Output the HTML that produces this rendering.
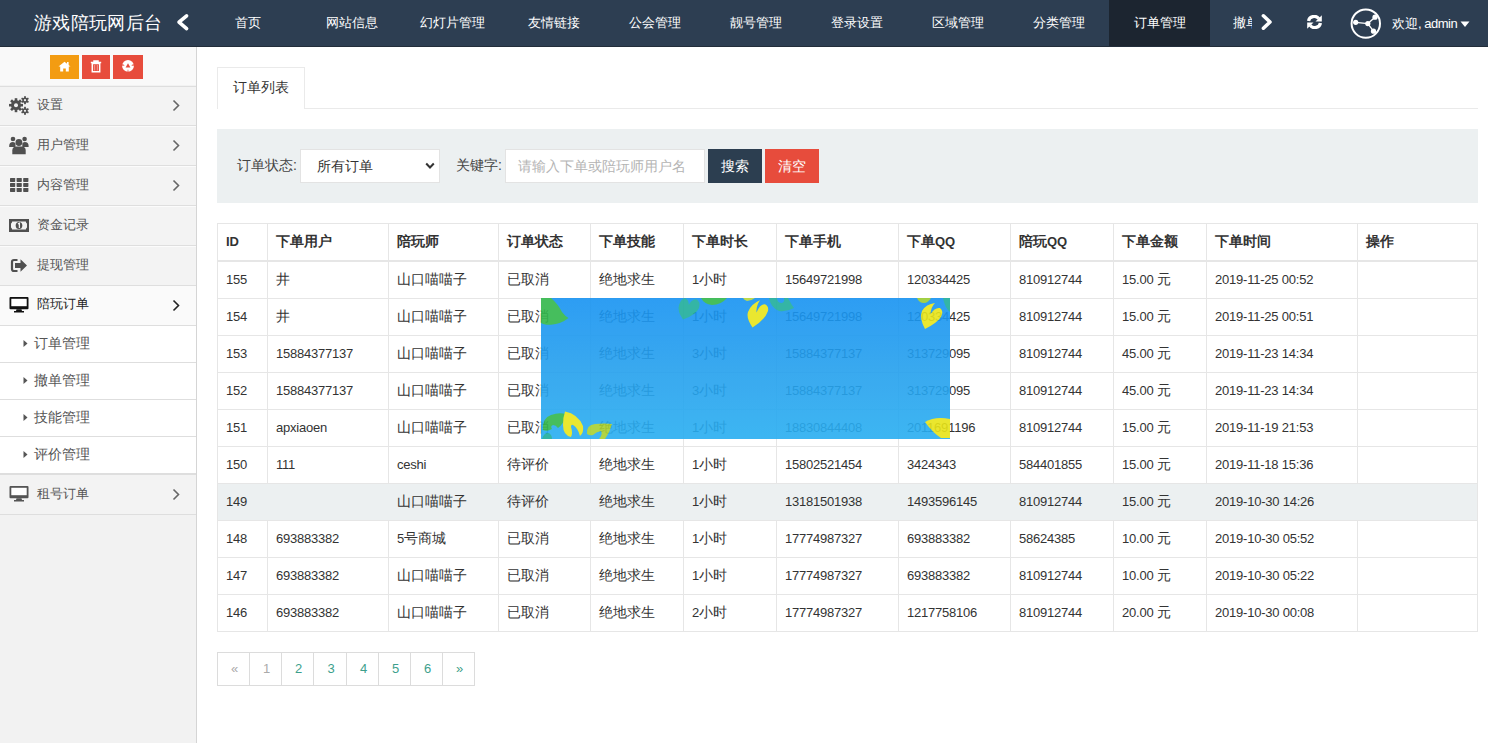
<!DOCTYPE html><html><head><meta charset="utf-8"><style>
*{margin:0;padding:0;box-sizing:border-box}
html,body{width:1488px;height:743px;overflow:hidden;background:#fff;font-family:"Liberation Sans", sans-serif;color:#333}
.abs{position:absolute}
.t{position:absolute;white-space:nowrap;line-height:20px}
.n{font-size:13px;letter-spacing:-0.22px}
svg{position:absolute;display:block}
</style></head><body>

<div class="abs" style="left:0;top:0;width:1488px;height:47px;background:#2d3e52"></div>
<div class="abs" style="left:0;top:46px;width:1488px;height:1px;background:#222d3a"></div>
<div class="t" style="left:34px;top:12px;font-size:18px;line-height:22px;color:#fff;letter-spacing:0.35px">游戏陪玩网后台</div>
<svg style="left:174px;top:11px" width="16" height="22" viewBox="0 0 16 22"><path d="M12.6 4.8 L5 11.2 L12.6 17.6" fill="none" stroke="#fff" stroke-width="3.6" stroke-linecap="round" stroke-linejoin="round"/></svg>
<div class="abs" style="left:1109px;top:0;width:101px;height:46px;background:#1c2530"></div>
<div class="t" style="left:187.5px;width:120px;text-align:center;top:13px;font-size:13px;color:#fff">首页</div>
<div class="t" style="left:291.5px;width:120px;text-align:center;top:13px;font-size:13px;color:#fff">网站信息</div>
<div class="t" style="left:392.5px;width:120px;text-align:center;top:13px;font-size:13px;color:#fff">幻灯片管理</div>
<div class="t" style="left:493.5px;width:120px;text-align:center;top:13px;font-size:13px;color:#fff">友情链接</div>
<div class="t" style="left:595px;width:120px;text-align:center;top:13px;font-size:13px;color:#fff">公会管理</div>
<div class="t" style="left:696px;width:120px;text-align:center;top:13px;font-size:13px;color:#fff">靓号管理</div>
<div class="t" style="left:797px;width:120px;text-align:center;top:13px;font-size:13px;color:#fff">登录设置</div>
<div class="t" style="left:898px;width:120px;text-align:center;top:13px;font-size:13px;color:#fff">区域管理</div>
<div class="t" style="left:999px;width:120px;text-align:center;top:13px;font-size:13px;color:#fff">分类管理</div>
<div class="t" style="left:1100px;width:120px;text-align:center;top:13px;font-size:13px;color:#fff">订单管理</div>
<div class="abs" style="left:1233px;top:0;width:19px;height:46px;overflow:hidden"><div class="t" style="left:0;top:13px;font-size:13px;color:#fff">撤单管理</div></div>
<svg style="left:1259px;top:11px" width="16" height="22" viewBox="0 0 16 22"><path d="M4.4 4.8 L11 11 L4.4 17.2" fill="none" stroke="#fff" stroke-width="3.6" stroke-linecap="round" stroke-linejoin="round"/></svg>
<svg style="left:1306px;top:15px" width="17" height="14" viewBox="0 0 17 14">
<path d="M2.6 6 A5.6 5 0 0 1 12.8 3.6" fill="none" stroke="#fff" stroke-width="3.2"/>
<path d="M15.8 0.3 L15.8 6.6 L9.5 6.6 Z" fill="#fff"/>
<path d="M14.4 8 A5.6 5 0 0 1 4.2 10.4" fill="none" stroke="#fff" stroke-width="3.2"/>
<path d="M1.2 13.7 L1.2 7.4 L7.5 7.4 Z" fill="#fff"/>
</svg>
<svg style="left:1350px;top:8px" width="32" height="32" viewBox="0 0 32 32">
<circle cx="15.8" cy="15.6" r="14.2" fill="none" stroke="#fff" stroke-width="2"/>
<path d="M5.7 14.3 L17.8 15.6 L25 9.2 M17.8 15.6 L23.5 23.2" stroke="#fff" stroke-width="1.3" fill="none"/>
<circle cx="5.7" cy="14.3" r="2.6" fill="#fff"/><circle cx="17.8" cy="15.6" r="2.6" fill="#fff"/>
<circle cx="25" cy="9.2" r="2.6" fill="#fff"/><circle cx="23.5" cy="23.2" r="2.6" fill="#fff"/>
</svg>
<div class="t" style="left:1392px;top:14px;font-size:13px;color:#fff">欢迎, <span style="letter-spacing:-0.5px;margin-left:-1px">admin</span></div>
<svg style="left:1460px;top:21px" width="10" height="7" viewBox="0 0 10 7"><path d="M0.5 0.5 L9.5 0.5 L5 6 Z" fill="#fff"/></svg>
<div class="abs" style="left:0;top:47px;width:196px;height:696px;background:#f2f2f2"></div>
<div class="abs" style="left:196px;top:47px;width:1px;height:696px;background:#d5d5d5"></div>
<div class="abs" style="left:0;top:47px;width:196px;height:38px;background:#f9f9f9"></div>
<div class="abs" style="left:50px;top:55px;width:29px;height:24px;background:#f39c12"></div>
<div class="abs" style="left:82px;top:55px;width:28px;height:24px;background:#e74c3c"></div>
<div class="abs" style="left:113px;top:55px;width:30px;height:24px;background:#e74c3c"></div>
<svg style="left:58px;top:61px" width="13" height="11" viewBox="0 0 13 11"><path d="M6.5 0.8 L12.5 5.6 L10.8 5.6 L10.8 10.4 L7.8 10.4 L7.8 7.6 L5.2 7.6 L5.2 10.4 L2.2 10.4 L2.2 5.6 L0.5 5.6 Z" fill="#fff"/><rect x="9" y="1" width="1.6" height="3" fill="#fff"/></svg>
<svg style="left:90px;top:60px" width="12" height="13" viewBox="0 0 12 13"><path d="M0.8 2.6 H11.2 M4 2.6 V1 H8 V2.6" stroke="#fff" stroke-width="1.5" fill="none"/><path d="M2.3 3.6 H9.7 V11.8 H2.3 Z" fill="none" stroke="#fff" stroke-width="1.5"/><path d="M4.7 5 V10.5 M7.3 5 V10.5" stroke="#fff" stroke-width="0.8" opacity="0.6"/></svg>
<svg style="left:121px;top:59px" width="14" height="14" viewBox="0 0 14 14"><circle cx="7" cy="6.9" r="5.9" fill="#fff"/><path d="M7 4.3 L9.4 8.4 H4.6 Z" fill="#e74c3c"/><path d="M6.4 12.8 L7 10 L7.6 12.8 Z M1.2 5 L3.8 6.2 L1.4 7 Z M12.8 5 L10.2 6.2 L12.6 7 Z" fill="#e74c3c"/></svg>
<div class="abs" style="left:0;top:87px;width:196px;height:38px;background:#f3f3f3"></div>
<div class="abs" style="left:0;top:126px;width:196px;height:39px;background:#f3f3f3"></div>
<div class="abs" style="left:0;top:126px;width:196px;height:1px;background:#fbfbfb"></div>
<div class="abs" style="left:0;top:166px;width:196px;height:39px;background:#f3f3f3"></div>
<div class="abs" style="left:0;top:166px;width:196px;height:1px;background:#fbfbfb"></div>
<div class="abs" style="left:0;top:206px;width:196px;height:39px;background:#f3f3f3"></div>
<div class="abs" style="left:0;top:206px;width:196px;height:1px;background:#fbfbfb"></div>
<div class="abs" style="left:0;top:246px;width:196px;height:39px;background:#f3f3f3"></div>
<div class="abs" style="left:0;top:246px;width:196px;height:1px;background:#fbfbfb"></div>
<div class="abs" style="left:0;top:286px;width:196px;height:39px;background:#fafafa"></div>
<div class="abs" style="left:0;top:326px;width:196px;height:36px;background:#fff"></div>
<div class="abs" style="left:0;top:363px;width:196px;height:36px;background:#fff"></div>
<div class="abs" style="left:0;top:400px;width:196px;height:36px;background:#fff"></div>
<div class="abs" style="left:0;top:437px;width:196px;height:36px;background:#fff"></div>
<div class="abs" style="left:0;top:475px;width:196px;height:39px;background:#f3f3f3"></div>
<div class="abs" style="left:0;top:86px;width:196px;height:1px;background:#dedede"></div>
<div class="abs" style="left:0;top:125px;width:196px;height:1px;background:#dedede"></div>
<div class="abs" style="left:0;top:165px;width:196px;height:1px;background:#dedede"></div>
<div class="abs" style="left:0;top:205px;width:196px;height:1px;background:#dedede"></div>
<div class="abs" style="left:0;top:245px;width:196px;height:1px;background:#dedede"></div>
<div class="abs" style="left:0;top:285px;width:196px;height:1px;background:#dedede"></div>
<div class="abs" style="left:0;top:325px;width:196px;height:1px;background:#dedede"></div>
<div class="abs" style="left:0;top:362px;width:196px;height:1px;background:#dedede"></div>
<div class="abs" style="left:0;top:399px;width:196px;height:1px;background:#dedede"></div>
<div class="abs" style="left:0;top:436px;width:196px;height:1px;background:#dedede"></div>
<div class="abs" style="left:0;top:514px;width:196px;height:1px;background:#dedede"></div>
<div class="abs" style="left:0;top:473px;width:196px;height:2px;background:#dedede"></div>
<div class="t" style="left:37px;top:95px;font-size:13px;color:#555">设置</div>
<div class="t" style="left:37px;top:135px;font-size:13px;color:#555">用户管理</div>
<div class="t" style="left:37px;top:175px;font-size:13px;color:#555">内容管理</div>
<div class="t" style="left:37px;top:215px;font-size:13px;color:#555">资金记录</div>
<div class="t" style="left:37px;top:255px;font-size:13px;color:#555">提现管理</div>
<div class="t" style="left:37px;top:294px;font-size:13px;color:#222">陪玩订单</div>
<div class="t" style="left:37px;top:484px;font-size:13px;color:#555">租号订单</div>
<svg style="left:171px;top:99px" width="10" height="13" viewBox="0 0 10 13"><path d="M2.5 1.5 L7.5 6.5 L2.5 11.5" fill="none" stroke="#666" stroke-width="1.6"/></svg>
<svg style="left:171px;top:139px" width="10" height="13" viewBox="0 0 10 13"><path d="M2.5 1.5 L7.5 6.5 L2.5 11.5" fill="none" stroke="#666" stroke-width="1.6"/></svg>
<svg style="left:171px;top:179px" width="10" height="13" viewBox="0 0 10 13"><path d="M2.5 1.5 L7.5 6.5 L2.5 11.5" fill="none" stroke="#666" stroke-width="1.6"/></svg>
<svg style="left:171px;top:299px" width="10" height="13" viewBox="0 0 10 13"><path d="M2.5 1.5 L7.5 6.5 L2.5 11.5" fill="none" stroke="#222" stroke-width="1.6"/></svg>
<svg style="left:171px;top:488px" width="10" height="13" viewBox="0 0 10 13"><path d="M2.5 1.5 L7.5 6.5 L2.5 11.5" fill="none" stroke="#666" stroke-width="1.6"/></svg>
<div class="t" style="left:34px;top:333px;font-size:14px;color:#555">订单管理</div>
<svg style="left:23px;top:340px" width="5" height="7" viewBox="0 0 5 7"><path d="M0.5 0 L4.5 3.5 L0.5 7 Z" fill="#555"/></svg>
<div class="t" style="left:34px;top:370px;font-size:14px;color:#555">撤单管理</div>
<svg style="left:23px;top:377px" width="5" height="7" viewBox="0 0 5 7"><path d="M0.5 0 L4.5 3.5 L0.5 7 Z" fill="#555"/></svg>
<div class="t" style="left:34px;top:407px;font-size:14px;color:#555">技能管理</div>
<svg style="left:23px;top:414px" width="5" height="7" viewBox="0 0 5 7"><path d="M0.5 0 L4.5 3.5 L0.5 7 Z" fill="#555"/></svg>
<div class="t" style="left:34px;top:444px;font-size:14px;color:#555">评价管理</div>
<svg style="left:23px;top:451px" width="5" height="7" viewBox="0 0 5 7"><path d="M0.5 0 L4.5 3.5 L0.5 7 Z" fill="#555"/></svg>
<svg style="left:8px;top:94px" width="24" height="22" viewBox="0 0 24 22">
<g fill="#505050">
<circle cx="8" cy="11.2" r="5"/>
<g transform="translate(8 11.2)"><rect x="-1.3" y="-7" width="2.6" height="14"/><rect x="-1.3" y="-7" width="2.6" height="14" transform="rotate(45)"/><rect x="-1.3" y="-7" width="2.6" height="14" transform="rotate(90)"/><rect x="-1.3" y="-7" width="2.6" height="14" transform="rotate(135)"/></g>
<circle cx="17" cy="6.2" r="2.6"/>
<g transform="translate(17 6.2)"><rect x="-0.9" y="-4" width="1.8" height="8"/><rect x="-0.9" y="-4" width="1.8" height="8" transform="rotate(60)"/><rect x="-0.9" y="-4" width="1.8" height="8" transform="rotate(120)"/></g>
<circle cx="17" cy="16.8" r="2.6"/>
<g transform="translate(17 16.8)"><rect x="-0.9" y="-4" width="1.8" height="8"/><rect x="-0.9" y="-4" width="1.8" height="8" transform="rotate(60)"/><rect x="-0.9" y="-4" width="1.8" height="8" transform="rotate(120)"/></g>
</g>
<circle cx="8" cy="11.2" r="2" fill="#f3f3f3"/><circle cx="17" cy="6.2" r="1.1" fill="#f3f3f3"/><circle cx="17" cy="16.8" r="1.1" fill="#f3f3f3"/>
</svg>
<svg style="left:9px;top:136px" width="20" height="19" viewBox="0 0 20 19">
<g fill="#505050">
<circle cx="4" cy="3" r="2.3"/><circle cx="15.6" cy="3" r="2.3"/>
<path d="M0.2 10 Q0.2 6 4 6 Q6 6 6.5 7.5 L6.5 11 H0.2 Z"/><path d="M19.6 10 Q19.6 6 15.8 6 Q13.8 6 13.3 7.5 L13.3 11 H19.6 Z"/>
<circle cx="9.9" cy="6.5" r="3.4"/>
<path d="M3.3 18.2 V14.5 Q3.3 10.5 7.5 10.5 H12.5 Q16.7 10.5 16.7 14.5 V18.2 Z"/>
</g></svg>
<svg style="left:10px;top:178px" width="19" height="14" viewBox="0 0 19 14"><g fill="#505050"><rect x="0" y="0" width="5.2" height="3.9" rx="0.6"/><rect x="0" y="5" width="5.2" height="3.9" rx="0.6"/><rect x="0" y="10" width="5.2" height="3.9" rx="0.6"/><rect x="6.6" y="0" width="5.2" height="3.9" rx="0.6"/><rect x="6.6" y="5" width="5.2" height="3.9" rx="0.6"/><rect x="6.6" y="10" width="5.2" height="3.9" rx="0.6"/><rect x="13.2" y="0" width="5.2" height="3.9" rx="0.6"/><rect x="13.2" y="5" width="5.2" height="3.9" rx="0.6"/><rect x="13.2" y="10" width="5.2" height="3.9" rx="0.6"/></g></svg>
<svg style="left:9px;top:219px" width="20" height="13" viewBox="0 0 20 13">
<rect x="0" y="0" width="20" height="13" fill="#505050"/>
<path d="M3.2 2.4 H16.8 Q17.2 4.2 18 4.6 V8.4 Q17.2 8.8 16.8 10.6 H3.2 Q2.8 8.8 2 8.4 V4.6 Q2.8 4.2 3.2 2.4 Z" fill="#f3f3f3"/>
<ellipse cx="10" cy="6.5" rx="3.3" ry="3.6" fill="#505050"/>
<path d="M9 4.9 L10.4 4.2 V8.9" stroke="#f3f3f3" stroke-width="1.3" fill="none"/>
</svg>
<svg style="left:10px;top:258px" width="18" height="15" viewBox="0 0 18 15">
<path d="M7.5 2 H4 Q2 2 2 4 V11 Q2 13 4 13 H7.5" fill="none" stroke="#505050" stroke-width="2.2"/>
<path d="M5 5 H10.5 V1.2 L17 7.5 L10.5 13.8 V10 H5 Z" fill="#505050"/>
</svg>
<svg style="left:9px;top:297px" width="20" height="17" viewBox="0 0 20 17">
<path d="M1.5 0 H18.5 Q19.5 0 19.5 1 V11.3 Q19.5 12.3 18.5 12.3 H1.5 Q0.5 12.3 0.5 11.3 V1 Q0.5 0 1.5 0 Z" fill="#111"/>
<rect x="2.3" y="1.8" width="15.4" height="7.4" fill="#fff"/>
<path d="M7.5 12.3 H12.5 L13 14 H15 V15.6 H5 V14 H7 Z" fill="#111"/>
</svg>
<svg style="left:9px;top:486px" width="20" height="17" viewBox="0 0 20 17">
<path d="M1.5 0 H18.5 Q19.5 0 19.5 1 V11.3 Q19.5 12.3 18.5 12.3 H1.5 Q0.5 12.3 0.5 11.3 V1 Q0.5 0 1.5 0 Z" fill="#555"/>
<rect x="2.3" y="1.8" width="15.4" height="7.4" fill="#fff"/>
<path d="M7.5 12.3 H12.5 L13 14 H15 V15.6 H5 V14 H7 Z" fill="#555"/>
</svg>
<div class="abs" style="left:217px;top:108px;width:1261px;height:1px;background:#eaeaea"></div>
<div class="abs" style="left:217px;top:67px;width:88px;height:42px;background:#fff;border:1px solid #eaeaea;border-bottom:none"></div>
<div class="t" style="left:233px;top:77px;font-size:14px;color:#333">订单列表</div>
<div class="abs" style="left:217px;top:129px;width:1261px;height:74px;background:#ecf0f1"></div>
<div class="t" style="left:237px;top:155px;font-size:14px;color:#444">订单状态:</div>
<div class="abs" style="left:300px;top:149px;width:140px;height:34px;background:#fff;border:1px solid #e3e3e3"></div>
<div class="t" style="left:317px;top:156px;font-size:14px;color:#333">所有订单</div>
<svg style="left:425px;top:162px" width="10" height="8" viewBox="0 0 10 8"><path d="M1.2 1.5 L5 5.5 L8.8 1.5" fill="none" stroke="#333" stroke-width="2"/></svg>
<div class="t" style="left:456px;top:155px;font-size:14px;color:#444">关键字:</div>
<div class="abs" style="left:505px;top:149px;width:200px;height:34px;background:#fff;border:1px solid #e3e3e3"></div>
<div class="t" style="left:518px;top:156px;font-size:14px;color:#b4b4b4">请输入下单或陪玩师用户名</div>
<div class="abs" style="left:708px;top:149px;width:54px;height:34px;background:#2c3e50"></div>
<div class="t" style="left:721px;top:156px;font-size:14px;color:#fff">搜索</div>
<div class="abs" style="left:765px;top:149px;width:54px;height:34px;background:#e74c3c"></div>
<div class="t" style="left:778px;top:156px;font-size:14px;color:#fff">清空</div>
<div class="abs" style="left:218px;top:484px;width:1259px;height:36px;background:#ecf0f1"></div>
<div class="abs" style="left:217px;top:223px;width:1px;height:409px;background:#e6e6e6"></div>
<div class="abs" style="left:267px;top:223px;width:1px;height:409px;background:#e6e6e6"></div>
<div class="abs" style="left:388px;top:223px;width:1px;height:409px;background:#e6e6e6"></div>
<div class="abs" style="left:498px;top:223px;width:1px;height:409px;background:#e6e6e6"></div>
<div class="abs" style="left:590px;top:223px;width:1px;height:409px;background:#e6e6e6"></div>
<div class="abs" style="left:683px;top:223px;width:1px;height:409px;background:#e6e6e6"></div>
<div class="abs" style="left:776px;top:223px;width:1px;height:409px;background:#e6e6e6"></div>
<div class="abs" style="left:898px;top:223px;width:1px;height:409px;background:#e6e6e6"></div>
<div class="abs" style="left:1010px;top:223px;width:1px;height:409px;background:#e6e6e6"></div>
<div class="abs" style="left:1113px;top:223px;width:1px;height:409px;background:#e6e6e6"></div>
<div class="abs" style="left:1206px;top:223px;width:1px;height:409px;background:#e6e6e6"></div>
<div class="abs" style="left:1357px;top:223px;width:1px;height:409px;background:#e6e6e6"></div>
<div class="abs" style="left:1477px;top:223px;width:1px;height:409px;background:#e6e6e6"></div>
<div class="abs" style="left:217px;top:223px;width:1261px;height:1px;background:#e6e6e6"></div>
<div class="abs" style="left:217px;top:260px;width:1261px;height:2px;background:#e6e6e6"></div>
<div class="abs" style="left:217px;top:298px;width:1261px;height:1px;background:#e6e6e6"></div>
<div class="abs" style="left:217px;top:335px;width:1261px;height:1px;background:#e6e6e6"></div>
<div class="abs" style="left:217px;top:372px;width:1261px;height:1px;background:#e6e6e6"></div>
<div class="abs" style="left:217px;top:409px;width:1261px;height:1px;background:#e6e6e6"></div>
<div class="abs" style="left:217px;top:446px;width:1261px;height:1px;background:#e6e6e6"></div>
<div class="abs" style="left:217px;top:483px;width:1261px;height:1px;background:#e6e6e6"></div>
<div class="abs" style="left:217px;top:520px;width:1261px;height:1px;background:#e6e6e6"></div>
<div class="abs" style="left:217px;top:557px;width:1261px;height:1px;background:#e6e6e6"></div>
<div class="abs" style="left:217px;top:594px;width:1261px;height:1px;background:#e6e6e6"></div>
<div class="abs" style="left:217px;top:631px;width:1261px;height:1px;background:#e6e6e6"></div>
<div class="abs" style="left:218px;top:484px;width:1259px;height:36px;background:#ecf0f1"></div>
<div class="t" style="left:226px;top:231px;font-size:14px;font-weight:bold;color:#333"><span class="n">ID</span></div>
<div class="t" style="left:276px;top:231px;font-size:14px;font-weight:bold;color:#333">下单用户</div>
<div class="t" style="left:397px;top:231px;font-size:14px;font-weight:bold;color:#333">陪玩师</div>
<div class="t" style="left:507px;top:231px;font-size:14px;font-weight:bold;color:#333">订单状态</div>
<div class="t" style="left:599px;top:231px;font-size:14px;font-weight:bold;color:#333">下单技能</div>
<div class="t" style="left:692px;top:231px;font-size:14px;font-weight:bold;color:#333">下单时长</div>
<div class="t" style="left:785px;top:231px;font-size:14px;font-weight:bold;color:#333">下单手机</div>
<div class="t" style="left:907px;top:231px;font-size:14px;font-weight:bold;color:#333">下单<span class="n">QQ</span></div>
<div class="t" style="left:1019px;top:231px;font-size:14px;font-weight:bold;color:#333">陪玩<span class="n">QQ</span></div>
<div class="t" style="left:1122px;top:231px;font-size:14px;font-weight:bold;color:#333">下单金额</div>
<div class="t" style="left:1215px;top:231px;font-size:14px;font-weight:bold;color:#333">下单时间</div>
<div class="t" style="left:1366px;top:231px;font-size:14px;font-weight:bold;color:#333">操作</div>
<div class="t" style="left:226px;top:269px;font-size:14px;color:#333"><span class="n">155</span></div>
<div class="t" style="left:276px;top:269px;font-size:14px;color:#333">井</div>
<div class="t" style="left:397px;top:269px;font-size:14px;color:#333">山口喵喵子</div>
<div class="t" style="left:507px;top:269px;font-size:14px;color:#333">已取消</div>
<div class="t" style="left:599px;top:269px;font-size:14px;color:#333">绝地求生</div>
<div class="t" style="left:692px;top:269px;font-size:14px;color:#333"><span class="n">1</span>小时</div>
<div class="t" style="left:785px;top:269px;font-size:14px;color:#333"><span class="n">15649721998</span></div>
<div class="t" style="left:907px;top:269px;font-size:14px;color:#333"><span class="n">120334425</span></div>
<div class="t" style="left:1019px;top:269px;font-size:14px;color:#333"><span class="n">810912744</span></div>
<div class="t" style="left:1122px;top:269px;font-size:14px;color:#333"><span class="n">15.00</span> 元</div>
<div class="t" style="left:1215px;top:269px;font-size:14px;color:#333"><span class="n">2019-11-25 00:52</span></div>
<div class="t" style="left:226px;top:306px;font-size:14px;color:#333"><span class="n">154</span></div>
<div class="t" style="left:276px;top:306px;font-size:14px;color:#333">井</div>
<div class="t" style="left:397px;top:306px;font-size:14px;color:#333">山口喵喵子</div>
<div class="t" style="left:507px;top:306px;font-size:14px;color:#333">已取消</div>
<div class="t" style="left:599px;top:306px;font-size:14px;color:#333">绝地求生</div>
<div class="t" style="left:692px;top:306px;font-size:14px;color:#333"><span class="n">1</span>小时</div>
<div class="t" style="left:785px;top:306px;font-size:14px;color:#333"><span class="n">15649721998</span></div>
<div class="t" style="left:907px;top:306px;font-size:14px;color:#333"><span class="n">120334425</span></div>
<div class="t" style="left:1019px;top:306px;font-size:14px;color:#333"><span class="n">810912744</span></div>
<div class="t" style="left:1122px;top:306px;font-size:14px;color:#333"><span class="n">15.00</span> 元</div>
<div class="t" style="left:1215px;top:306px;font-size:14px;color:#333"><span class="n">2019-11-25 00:51</span></div>
<div class="t" style="left:226px;top:343px;font-size:14px;color:#333"><span class="n">153</span></div>
<div class="t" style="left:276px;top:343px;font-size:14px;color:#333"><span class="n">15884377137</span></div>
<div class="t" style="left:397px;top:343px;font-size:14px;color:#333">山口喵喵子</div>
<div class="t" style="left:507px;top:343px;font-size:14px;color:#333">已取消</div>
<div class="t" style="left:599px;top:343px;font-size:14px;color:#333">绝地求生</div>
<div class="t" style="left:692px;top:343px;font-size:14px;color:#333"><span class="n">3</span>小时</div>
<div class="t" style="left:785px;top:343px;font-size:14px;color:#333"><span class="n">15884377137</span></div>
<div class="t" style="left:907px;top:343px;font-size:14px;color:#333"><span class="n">313729095</span></div>
<div class="t" style="left:1019px;top:343px;font-size:14px;color:#333"><span class="n">810912744</span></div>
<div class="t" style="left:1122px;top:343px;font-size:14px;color:#333"><span class="n">45.00</span> 元</div>
<div class="t" style="left:1215px;top:343px;font-size:14px;color:#333"><span class="n">2019-11-23 14:34</span></div>
<div class="t" style="left:226px;top:380px;font-size:14px;color:#333"><span class="n">152</span></div>
<div class="t" style="left:276px;top:380px;font-size:14px;color:#333"><span class="n">15884377137</span></div>
<div class="t" style="left:397px;top:380px;font-size:14px;color:#333">山口喵喵子</div>
<div class="t" style="left:507px;top:380px;font-size:14px;color:#333">已取消</div>
<div class="t" style="left:599px;top:380px;font-size:14px;color:#333">绝地求生</div>
<div class="t" style="left:692px;top:380px;font-size:14px;color:#333"><span class="n">3</span>小时</div>
<div class="t" style="left:785px;top:380px;font-size:14px;color:#333"><span class="n">15884377137</span></div>
<div class="t" style="left:907px;top:380px;font-size:14px;color:#333"><span class="n">313729095</span></div>
<div class="t" style="left:1019px;top:380px;font-size:14px;color:#333"><span class="n">810912744</span></div>
<div class="t" style="left:1122px;top:380px;font-size:14px;color:#333"><span class="n">45.00</span> 元</div>
<div class="t" style="left:1215px;top:380px;font-size:14px;color:#333"><span class="n">2019-11-23 14:34</span></div>
<div class="t" style="left:226px;top:417px;font-size:14px;color:#333"><span class="n">151</span></div>
<div class="t" style="left:276px;top:417px;font-size:14px;color:#333"><span class="n">apxiaoen</span></div>
<div class="t" style="left:397px;top:417px;font-size:14px;color:#333">山口喵喵子</div>
<div class="t" style="left:507px;top:417px;font-size:14px;color:#333">已取消</div>
<div class="t" style="left:599px;top:417px;font-size:14px;color:#333">绝地求生</div>
<div class="t" style="left:692px;top:417px;font-size:14px;color:#333"><span class="n">1</span>小时</div>
<div class="t" style="left:785px;top:417px;font-size:14px;color:#333"><span class="n">18830844408</span></div>
<div class="t" style="left:907px;top:417px;font-size:14px;color:#333"><span class="n">2011691196</span></div>
<div class="t" style="left:1019px;top:417px;font-size:14px;color:#333"><span class="n">810912744</span></div>
<div class="t" style="left:1122px;top:417px;font-size:14px;color:#333"><span class="n">15.00</span> 元</div>
<div class="t" style="left:1215px;top:417px;font-size:14px;color:#333"><span class="n">2019-11-19 21:53</span></div>
<div class="t" style="left:226px;top:454px;font-size:14px;color:#333"><span class="n">150</span></div>
<div class="t" style="left:276px;top:454px;font-size:14px;color:#333"><span class="n">111</span></div>
<div class="t" style="left:397px;top:454px;font-size:14px;color:#333"><span class="n">ceshi</span></div>
<div class="t" style="left:507px;top:454px;font-size:14px;color:#333">待评价</div>
<div class="t" style="left:599px;top:454px;font-size:14px;color:#333">绝地求生</div>
<div class="t" style="left:692px;top:454px;font-size:14px;color:#333"><span class="n">1</span>小时</div>
<div class="t" style="left:785px;top:454px;font-size:14px;color:#333"><span class="n">15802521454</span></div>
<div class="t" style="left:907px;top:454px;font-size:14px;color:#333"><span class="n">3424343</span></div>
<div class="t" style="left:1019px;top:454px;font-size:14px;color:#333"><span class="n">584401855</span></div>
<div class="t" style="left:1122px;top:454px;font-size:14px;color:#333"><span class="n">15.00</span> 元</div>
<div class="t" style="left:1215px;top:454px;font-size:14px;color:#333"><span class="n">2019-11-18 15:36</span></div>
<div class="t" style="left:226px;top:491px;font-size:14px;color:#333"><span class="n">149</span></div>
<div class="t" style="left:397px;top:491px;font-size:14px;color:#333">山口喵喵子</div>
<div class="t" style="left:507px;top:491px;font-size:14px;color:#333">待评价</div>
<div class="t" style="left:599px;top:491px;font-size:14px;color:#333">绝地求生</div>
<div class="t" style="left:692px;top:491px;font-size:14px;color:#333"><span class="n">1</span>小时</div>
<div class="t" style="left:785px;top:491px;font-size:14px;color:#333"><span class="n">13181501938</span></div>
<div class="t" style="left:907px;top:491px;font-size:14px;color:#333"><span class="n">1493596145</span></div>
<div class="t" style="left:1019px;top:491px;font-size:14px;color:#333"><span class="n">810912744</span></div>
<div class="t" style="left:1122px;top:491px;font-size:14px;color:#333"><span class="n">15.00</span> 元</div>
<div class="t" style="left:1215px;top:491px;font-size:14px;color:#333"><span class="n">2019-10-30 14:26</span></div>
<div class="t" style="left:226px;top:528px;font-size:14px;color:#333"><span class="n">148</span></div>
<div class="t" style="left:276px;top:528px;font-size:14px;color:#333"><span class="n">693883382</span></div>
<div class="t" style="left:397px;top:528px;font-size:14px;color:#333"><span class="n">5</span>号商城</div>
<div class="t" style="left:507px;top:528px;font-size:14px;color:#333">已取消</div>
<div class="t" style="left:599px;top:528px;font-size:14px;color:#333">绝地求生</div>
<div class="t" style="left:692px;top:528px;font-size:14px;color:#333"><span class="n">1</span>小时</div>
<div class="t" style="left:785px;top:528px;font-size:14px;color:#333"><span class="n">17774987327</span></div>
<div class="t" style="left:907px;top:528px;font-size:14px;color:#333"><span class="n">693883382</span></div>
<div class="t" style="left:1019px;top:528px;font-size:14px;color:#333"><span class="n">58624385</span></div>
<div class="t" style="left:1122px;top:528px;font-size:14px;color:#333"><span class="n">10.00</span> 元</div>
<div class="t" style="left:1215px;top:528px;font-size:14px;color:#333"><span class="n">2019-10-30 05:52</span></div>
<div class="t" style="left:226px;top:565px;font-size:14px;color:#333"><span class="n">147</span></div>
<div class="t" style="left:276px;top:565px;font-size:14px;color:#333"><span class="n">693883382</span></div>
<div class="t" style="left:397px;top:565px;font-size:14px;color:#333">山口喵喵子</div>
<div class="t" style="left:507px;top:565px;font-size:14px;color:#333">已取消</div>
<div class="t" style="left:599px;top:565px;font-size:14px;color:#333">绝地求生</div>
<div class="t" style="left:692px;top:565px;font-size:14px;color:#333"><span class="n">1</span>小时</div>
<div class="t" style="left:785px;top:565px;font-size:14px;color:#333"><span class="n">17774987327</span></div>
<div class="t" style="left:907px;top:565px;font-size:14px;color:#333"><span class="n">693883382</span></div>
<div class="t" style="left:1019px;top:565px;font-size:14px;color:#333"><span class="n">810912744</span></div>
<div class="t" style="left:1122px;top:565px;font-size:14px;color:#333"><span class="n">10.00</span> 元</div>
<div class="t" style="left:1215px;top:565px;font-size:14px;color:#333"><span class="n">2019-10-30 05:22</span></div>
<div class="t" style="left:226px;top:602px;font-size:14px;color:#333"><span class="n">146</span></div>
<div class="t" style="left:276px;top:602px;font-size:14px;color:#333"><span class="n">693883382</span></div>
<div class="t" style="left:397px;top:602px;font-size:14px;color:#333">山口喵喵子</div>
<div class="t" style="left:507px;top:602px;font-size:14px;color:#333">已取消</div>
<div class="t" style="left:599px;top:602px;font-size:14px;color:#333">绝地求生</div>
<div class="t" style="left:692px;top:602px;font-size:14px;color:#333"><span class="n">2</span>小时</div>
<div class="t" style="left:785px;top:602px;font-size:14px;color:#333"><span class="n">17774987327</span></div>
<div class="t" style="left:907px;top:602px;font-size:14px;color:#333"><span class="n">1217758106</span></div>
<div class="t" style="left:1019px;top:602px;font-size:14px;color:#333"><span class="n">810912744</span></div>
<div class="t" style="left:1122px;top:602px;font-size:14px;color:#333"><span class="n">20.00</span> 元</div>
<div class="t" style="left:1215px;top:602px;font-size:14px;color:#333"><span class="n">2019-10-30 00:08</span></div>
<div class="abs" style="left:217px;top:652px;width:258px;height:34px;border:1px solid #dcdcdc"></div>
<div class="abs" style="left:249px;top:652px;width:1px;height:34px;background:#dcdcdc"></div>
<div class="abs" style="left:281px;top:652px;width:1px;height:34px;background:#dcdcdc"></div>
<div class="abs" style="left:313px;top:652px;width:1px;height:34px;background:#dcdcdc"></div>
<div class="abs" style="left:346px;top:652px;width:1px;height:34px;background:#dcdcdc"></div>
<div class="abs" style="left:378px;top:652px;width:1px;height:34px;background:#dcdcdc"></div>
<div class="abs" style="left:410px;top:652px;width:1px;height:34px;background:#dcdcdc"></div>
<div class="abs" style="left:442px;top:652px;width:1px;height:34px;background:#dcdcdc"></div>
<div class="t" style="left:217px;width:33px;text-align:center;top:659px;font-size:13px;padding-left:2px;color:#aaa">«</div>
<div class="t" style="left:249px;width:33px;text-align:center;top:659px;font-size:13px;padding-left:2px;color:#aaa">1</div>
<div class="t" style="left:281px;width:33px;text-align:center;top:659px;font-size:13px;padding-left:2px;color:#3d9f8c">2</div>
<div class="t" style="left:313px;width:34px;text-align:center;top:659px;font-size:13px;padding-left:2px;color:#3d9f8c">3</div>
<div class="t" style="left:346px;width:33px;text-align:center;top:659px;font-size:13px;padding-left:2px;color:#3d9f8c">4</div>
<div class="t" style="left:378px;width:33px;text-align:center;top:659px;font-size:13px;padding-left:2px;color:#3d9f8c">5</div>
<div class="t" style="left:410px;width:33px;text-align:center;top:659px;font-size:13px;padding-left:2px;color:#3d9f8c">6</div>
<div class="t" style="left:442px;width:33px;text-align:center;top:659px;font-size:13px;padding-left:2px;color:#3d9f8c">»</div>
<div class="abs" style="left:541px;top:298px;width:409px;height:141px;overflow:hidden;background:linear-gradient(180deg,rgb(23,147,242) 0%,rgb(36,160,238) 51%,rgb(41,174,241) 100%);opacity:0.9">
<svg style="left:0;top:0" width="409" height="141" viewBox="0 0 409 141">
<!-- top-left green leaf -->
<path d="M0 0 H10 Q17 6 21 14 Q24 18 27.5 20 Q20 26 10 26.7 Q3 27 0 25 Z" fill="#33b84c"/>
<!-- top middle -->
<path d="M142 21.5 Q136 13 138 7 Q140 1 144 0 Q148 2 147.8 7 Q150 2 155 1 Q160 4 158 10 Q155 17 142 21.5 Z" fill="#1fae9c"/>
<path d="M160 0 H186 Q180 7 171 7 Q163 6 160 0 Z" fill="#33b84c"/>
<path d="M202 0 H214 Q210 3 206 3 Q203 2 202 0 Z" fill="#b8d83a"/>
<path d="M211.5 29.4 Q205 20 207 14 Q210 6 219 2.3 Q215 8 215.5 14.5 Q219 6 223.8 6.2 Q228 8 227 13 Q224 22 211.5 29.4 Z" fill="#e8e51a"/>
<path d="M228 0 H236 Q236 5 241 5 Q244 4 243 0 H247 Q250 6 253 10 Q246 14 238 13 Q230 10 228 0 Z" fill="#1fae9c"/>
<!-- top right -->
<path d="M376 0 H390 Q387 5 383 5 Q378 5 376 0 Z" fill="#9acd32"/>
<path d="M384 31 Q378 20 381 13 Q385 6 394 5 Q390 9 389.5 16 Q394 9 399 10 Q403 13 400 19 Q396 25 384 31 Z" fill="#e8e51a"/>
<path d="M402 0 H409 V14 Q404 10 402 0 Z" fill="#1fae9c"/>
<!-- bottom left -->
<path d="M2 132 Q1 120 10 117 Q18 114 25 116 Q23 126 17 130 Q15 127 12 127 Q9 128 11 131 Q6 134 2 132 Z" fill="#33b84c"/>
<path d="M24 113.5 Q37 116 42 128 Q43 135 39 138 Q37 130 32 127 Q30 126 30 129 Q32 135 30 139 Q22 137 22 127 Q22 119 24 113.5 Z" fill="#e8e51a"/>
<path d="M46 136 Q45 127 54 126 Q63 125 71 126 Q69 134 64 141 H58 Q62 136 60 133 Q55 134 52 137 Q49 138 46 136 Z" fill="#a9d030"/>
<path d="M1 141 Q3 134 8 135 Q11 137 11 141 Z" fill="#1fae9c"/>
<!-- bottom right -->
<path d="M384 124 Q394 118 409 121 V140 H400 Q392 135 384 124 Z" fill="#e8e418"/>
</svg></div>
</body></html>
